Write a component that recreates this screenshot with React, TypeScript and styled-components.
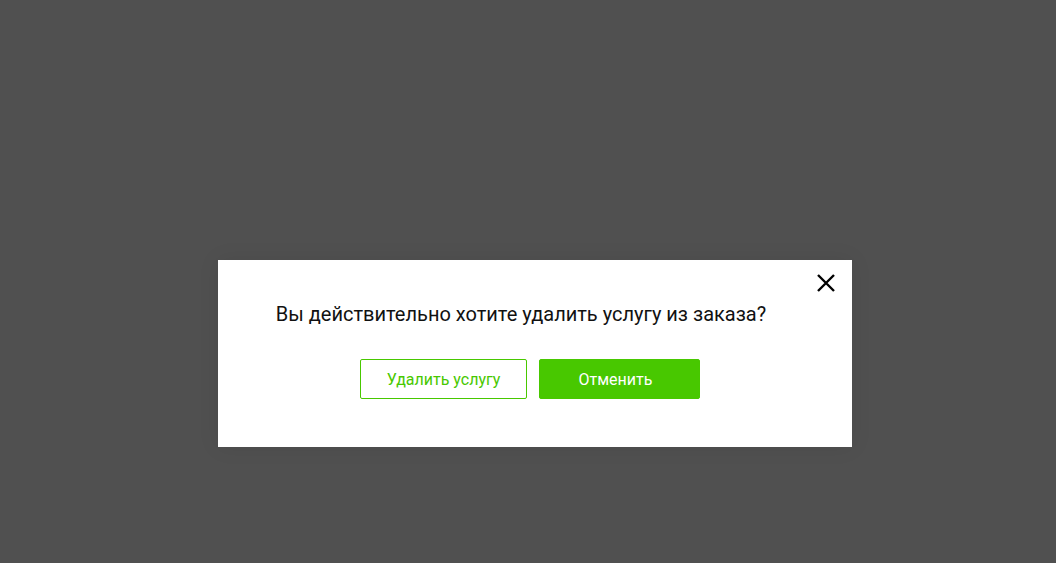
import React from "react";
import styled, { createGlobalStyle } from "styled-components";

const Global = createGlobalStyle`
  html, body { margin: 0; padding: 0; }
  body {
    background: #505050;
    font-family: Roboto, "Liberation Sans", sans-serif;
    width: 1056px;
    height: 563px;
    overflow: hidden;
  }
`;

const Overlay = styled.div`
  width: 1056px;
  height: 563px;
  box-sizing: border-box;
  padding: 260px 0 0 218px;
  background: #505050;
`;

const Modal = styled.div`
  position: relative;
  width: 634px;
  height: 187px;
  box-sizing: border-box;
  background: #ffffff;
  padding: 42px 84px 0 56px;
  display: flex;
  flex-direction: column;
  align-items: center;
  box-shadow: 0 0 20px rgba(0, 0, 0, 0.08);
`;

const Title = styled.div`
  font-size: 20px;
  line-height: 24px;
  color: #111111;
  text-align: center;
  white-space: nowrap;
`;

const Actions = styled.div`
  display: flex;
  gap: 12px;
  margin-top: 33px;
  margin-left: 18px;
`;

const Button = styled.button<{ $primary?: boolean }>`
  height: 40px;
  width: ${(p) => (p.$primary ? "161px" : "167px")};
  box-sizing: border-box;
  border-radius: 2px;
  border: 1px solid #48c800;
  background: ${(p) => (p.$primary ? "#48c800" : "#ffffff")};
  color: ${(p) => (p.$primary ? "#ffffff" : "#48c800")};
  font-family: Roboto, "Liberation Sans", sans-serif;
  font-size: 16px;
  padding: ${(p) => (p.$primary ? "0 8px 0 0" : "0")};
  cursor: pointer;
`;

const Close = styled.button`
  position: absolute;
  top: 14px;
  right: 17px;
  width: 18px;
  height: 18px;
  padding: 0;
  border: 0;
  background: transparent;
  cursor: pointer;
  display: flex;
`;

export default function App() {
  return (
    <>
      <Global />
      <Overlay>
        <Modal>
          <Close aria-label="Закрыть">
            <svg width="18" height="18" viewBox="0 0 18 18">
              <path d="M1 1L17 17M17 1L1 17" stroke="#000" strokeWidth="2.4" />
            </svg>
          </Close>
          <Title>Вы действительно хотите удалить услугу из заказа?</Title>
          <Actions>
            <Button>Удалить услугу</Button>
            <Button $primary>Отменить</Button>
          </Actions>
        </Modal>
      </Overlay>
    </>
  );
}
